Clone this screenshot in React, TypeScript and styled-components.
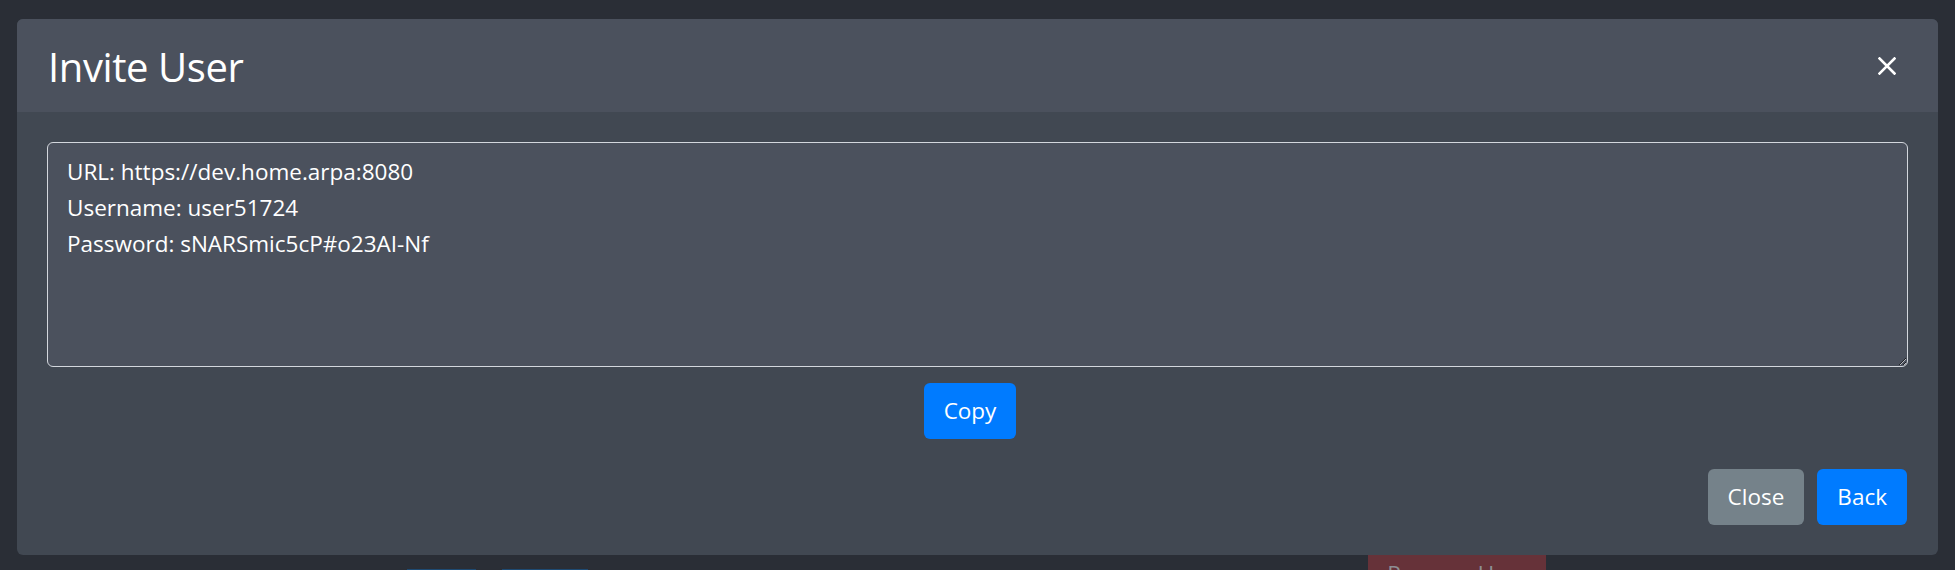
import React from "react";
import styled, { createGlobalStyle } from "styled-components";

const GlobalStyle = createGlobalStyle`
  html, body {
    margin: 0;
    padding: 0;
    background: #2a2e36;
  }
  * {
    box-sizing: border-box;
  }
`;

const FONT = `"Open Sans", "Noto Sans", "Liberation Sans", sans-serif`;

const SPage = styled.div`
  width: 1955px;
  height: 570px;
  overflow: hidden;
  display: flex;
  flex-direction: column;
  background: #2a2e36;
  font-family: ${FONT};
`;

const SModal = styled.div`
  margin: 19px 17px 0;
  border-radius: 6px;
  overflow: hidden;
  background: #414852;
  display: flex;
  flex-direction: column;
`;

const SHeader = styled.div`
  height: 93px;
  display: flex;
  align-items: center;
  justify-content: space-between;
  padding: 2px 42px 0 31px;
  background: #4b515d;
`;

const STitle = styled.h4`
  margin: 0;
  font-size: 40px;
  font-weight: 400;
  letter-spacing: -0.4px;
  color: #ffffff;
  line-height: 1.2;
`;

const SCloseX = styled.button`
  border: 0;
  padding: 0;
  margin-top: -2px;
  background: transparent;
  width: 18px;
  height: 18px;
  display: flex;
  cursor: pointer;
`;

const SBody = styled.div`
  padding: 30px 30px 0;
  display: flex;
  flex-direction: column;
  align-items: center;
`;

const STextArea = styled.textarea`
  width: 100%;
  height: 225px;
  display: block;
  margin: 0;
  padding: 11px 19px 9px;
  background: #4b515d;
  border: 1px solid #d3d7dd;
  border-radius: 6px;
  color: #ffffff;
  font-family: ${FONT};
  font-size: 22.5px;
  line-height: 36px;
  resize: vertical;
  outline: none;
`;

const SCopyRow = styled.div`
  margin-top: 16px;
  display: flex;
  justify-content: center;
  padding-right: 15px;
`;

const SButton = styled.button<{ $variant: "primary" | "secondary" }>`
  height: 56px;
  padding: 0 20px;
  border: 0;
  border-radius: 6px;
  font-family: ${FONT};
  font-size: 22.5px;
  line-height: 1;
  color: #ffffff;
  cursor: pointer;
  background: ${(p) => (p.$variant === "primary" ? "#007bff" : "#75828a")};
`;

const SFooter = styled.div`
  display: flex;
  justify-content: flex-end;
  gap: 13px;
  padding: 30px 31px 30px;
`;

const SBehind = styled.div`
  height: 15px;
  display: flex;
  align-items: flex-start;
  padding-left: 407px;
`;

const SGhostButton = styled.div<{ $w: number; $danger?: boolean }>`
  width: ${(p) => p.$w}px;
  height: 40px;
  margin-top: ${(p) => (p.$danger ? 0 : 14)}px;
  margin-left: ${(p) => (p.$danger ? 780 : 26)}px;
  &:first-child {
    margin-left: 0;
  }
  background: ${(p) => (p.$danger ? "#663239" : "#1d4a73")};
  color: #8d8f94;
  font-size: 22.5px;
  line-height: 24px;
  padding-top: 7px;
  text-align: center;
  white-space: nowrap;
  overflow: hidden;
`;

const inviteText = `URL: https://dev.home.arpa:8080
Username: user51724
Password: sNARSmic5cP#o23AI-Nf`;

export default function App() {
  return (
    <SPage>
      <GlobalStyle />
      <SModal>
        <SHeader>
          <STitle>Invite User</STitle>
          <SCloseX aria-label="Close">
            <svg width="18" height="18" viewBox="0 0 18 18">
              <path
                d="M1.5 1.5 L16.5 16.5 M16.5 1.5 L1.5 16.5"
                stroke="#ffffff"
                strokeWidth="2.6"
                strokeLinecap="square"
              />
            </svg>
          </SCloseX>
        </SHeader>
        <SBody>
          <STextArea defaultValue={inviteText} readOnly spellCheck={false} />
          <SCopyRow>
            <SButton $variant="primary">Copy</SButton>
          </SCopyRow>
        </SBody>
        <SFooter>
          <SButton $variant="secondary">Close</SButton>
          <SButton $variant="primary">Back</SButton>
        </SFooter>
      </SModal>
      <SBehind>
        <SGhostButton $w={69} />
        <SGhostButton $w={86} />
        <SGhostButton $w={178} $danger>
          Remove User
        </SGhostButton>
      </SBehind>
    </SPage>
  );
}
